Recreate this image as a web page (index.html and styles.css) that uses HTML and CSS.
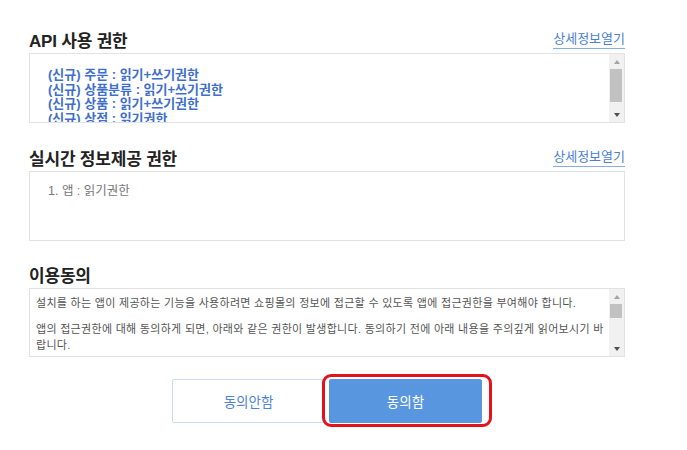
FILE: index.html
```html
<!DOCTYPE html>
<html lang="ko">
<head>
<meta charset="utf-8">
<link rel="stylesheet" href="styles.css">
</head>
<body>
<div class="page">
  <section class="section">
    <div class="head">
      <h2 class="title">API 사용 권한</h2>
      <a class="more" href="#">상세정보열기</a>
    </div>
    <div class="box box-api">
      <div class="box-body">
        <ul class="perm-list">
          <li>(신규) 주문 : 읽기+쓰기권한</li>
          <li>(신규) 상품분류 : 읽기+쓰기권한</li>
          <li>(신규) 상품 : 읽기+쓰기권한</li>
          <li>(신규) 상점 : 읽기권한</li>
        </ul>
      </div>
      <div class="scrollbar">
        <span class="sb-btn sb-up"></span>
        <span class="sb-track"><span class="sb-thumb thumb-api"></span></span>
        <span class="sb-btn sb-down"></span>
      </div>
    </div>
  </section>

  <section class="section section-2">
    <div class="head">
      <h2 class="title">실시간 정보제공 권한</h2>
      <a class="more" href="#">상세정보열기</a>
    </div>
    <div class="box box-info">
      <p class="info-item">1. 앱 : 읽기권한</p>
    </div>
  </section>

  <section class="section section-3">
    <div class="head">
      <h2 class="title">이용동의</h2>
    </div>
    <div class="box box-agree">
      <div class="box-body agree-body">
        <p>설치를 하는 앱이 제공하는 기능을 사용하려면 쇼핑몰의 정보에 접근할 수 있도록 앱에 접근권한을 부여해야 합니다.</p>
        <p>앱의 접근권한에 대해 동의하게 되면, 아래와 같은 권한이 발생합니다. 동의하기 전에 아래 내용을 주의깊게 읽어보시기 바랍니다.</p>
        <p>1. 앱은 쇼핑몰의 정보를 조회하거나 변경할 수 있습니다.</p>
        <p>2. 앱 사용을 중지하려면 앱 삭제를 통해 접근권한을 해제할 수 있습니다.</p>
      </div>
      <div class="scrollbar">
        <span class="sb-btn sb-up"></span>
        <span class="sb-track"><span class="sb-thumb thumb-agree"></span></span>
        <span class="sb-btn sb-down"></span>
      </div>
    </div>
  </section>

  <div class="actions">
    <button class="btn btn-cancel" type="button">동의안함</button>
    <div class="btn-wrap">
      <button class="btn btn-ok" type="button">동의함</button>
      <span class="highlight"></span>
    </div>
  </div>
</div>
</body>
</html>
```

FILE: styles.css
```css
* { box-sizing: border-box; }
html, body { margin: 0; padding: 0; background: #fff; }
body {
  font-family: "Liberation Sans", "Noto Sans CJK KR", sans-serif;
  color: #222;
}
.page {
  width: 596px;
  margin-left: 29px;
  padding-top: 28px;
  padding-bottom: 20px;
}
.head {
  display: flex;
  justify-content: space-between;
  align-items: flex-end;
  height: 25px;
}
.title {
  margin: 0;
  font-size: 17px;
  font-weight: bold;
  line-height: 22px;
  color: #222;
  letter-spacing: -0.2px;
}
.more {
  font-size: 13px;
  line-height: 18px;
  color: #4a7fd2;
  text-decoration: none;
  border-bottom: 1px solid #86aee6;
  margin-bottom: 4px;
}
.box {
  border: 1px solid #e2e2e2;
  background: #fff;
}
.box-api, .box-agree {
  display: flex;
}
.box-body {
  flex: 1;
  min-width: 0;
  overflow: hidden;
}
.scrollbar {
  width: 15px;
  flex: none;
  display: flex;
  flex-direction: column;
  background: #f1f1f1;
}
.sb-btn {
  height: 15px;
  flex: none;
  display: flex;
  align-items: center;
  justify-content: center;
}
.sb-up::before {
  content: "";
  border-left: 3.5px solid transparent;
  border-right: 3.5px solid transparent;
  border-bottom: 4px solid #a3a3a3;
}
.sb-down::before {
  content: "";
  border-left: 3.5px solid transparent;
  border-right: 3.5px solid transparent;
  border-top: 4px solid #505050;
}
.sb-track {
  flex: 1;
  display: flex;
  flex-direction: column;
  padding: 0 2px 0 1px;
}
.sb-thumb {
  display: block;
  background: #c1c1c1;
}
.thumb-api { height: 33px; }
.thumb-agree { height: 14px; }

.box-api { height: 70px; }
.box-api .box-body { padding: 14px 0 6px 18px; }
.perm-list {
  list-style: none;
  margin: 0;
  padding: 0;
  font-size: 13px;
  line-height: 14.5px;
  font-weight: bold;
  color: #3f6fce;
  white-space: nowrap;
}
.section-2 { margin-top: 20px; }
.section-2 .head { height: 28px; }
.box-info { height: 70px; padding: 11px 18px; }
.info-item {
  margin: 0;
  font-size: 12.5px;
  line-height: 16px;
  color: #777;
}
.section-3 { margin-top: 22px; }
.box-agree { height: 69px; }
.agree-body {
  padding: 6px 4px 0 6px;
  font-size: 11px;
  line-height: 16px;
  color: #555;
  letter-spacing: 0.3px;
  word-break: break-all;
}
.agree-body p { margin: 0 0 10px; }
.actions {
  display: flex;
  justify-content: center;
  align-items: flex-start;
  gap: 4px;
  margin-top: 22px;
}
.btn {
  width: 153px;
  height: 44px;
  font-family: inherit;
  font-size: 13.5px;
  border-radius: 2px;
  cursor: pointer;
}
.btn-cancel {
  background: #fff;
  border: 1px solid #cddbf0;
  color: #4f83d6;
}
.btn-wrap {
  position: relative;
  display: flex;
}
.btn-ok {
  background: #5897df;
  border: 1px solid #5897df;
  color: #fff;
}
.highlight {
  position: absolute;
  left: -7px;
  right: -10px;
  top: -5px;
  bottom: -4px;
  border: 3px solid #e4121b;
  border-radius: 9px;
  pointer-events: none;
}
```
